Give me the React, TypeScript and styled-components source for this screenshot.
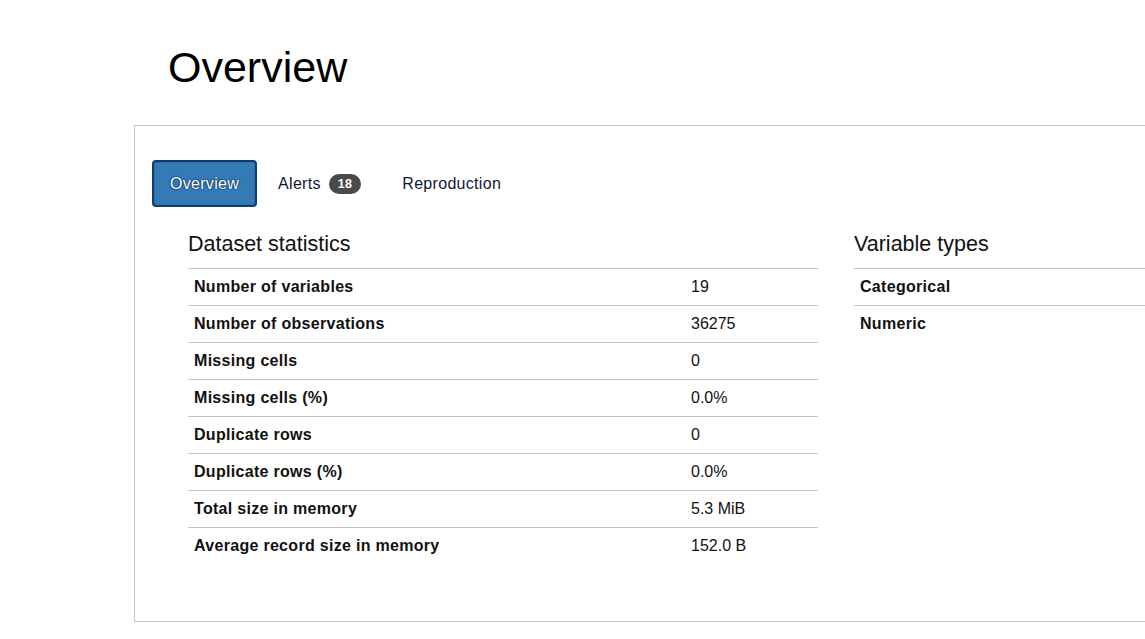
import React from "react";
import styled, { createGlobalStyle } from "styled-components";

const Global = createGlobalStyle`
  html, body {
    margin: 0;
    padding: 0;
    background: #fff;
    overflow: hidden;
    font-family: "Liberation Sans", Arial, sans-serif;
    color: #000;
  }
`;

const Page = styled.div`
  width: 1145px;
  height: 639px;
  overflow: hidden;
  padding-top: 46px;
  padding-left: 134px;
  box-sizing: border-box;
`;

const Title = styled.h1`
  margin: 0 0 36px 34px;
  font-size: 43px;
  line-height: 43px;
  font-weight: 400;
  color: #000;
`;

const Panel = styled.section`
  width: 1100px;
  height: 497px;
  box-sizing: border-box;
  border: 1px solid #c6c6c6;
  padding: 34px 0 0 17px;
`;

const Tabs = styled.nav`
  display: flex;
  align-items: center;
  height: 47px;
`;

const ActiveTab = styled.button`
  height: 47px;
  box-sizing: border-box;
  padding: 0 16px;
  background: #337ab7;
  border: 2px solid #123c6e;
  border-radius: 4px;
  color: #fff;
  font-family: "Liberation Sans", Arial, sans-serif;
  font-size: 16px;
  letter-spacing: 0.3px;
  text-shadow: 0 0 2px #0b2545, 0 0 1px #0b2545;
  box-shadow: inset 0 0 2px rgba(0, 0, 0, 0.35);
`;

const TabLink = styled.a`
  display: flex;
  align-items: center;
  gap: 8px;
  margin-left: 1px;
  padding: 0 20px;
  font-size: 16px;
  letter-spacing: 0.3px;
  color: #12163a;
  text-decoration: none;
`;

const Badge = styled.span`
  display: inline-flex;
  align-items: center;
  justify-content: center;
  height: 20px;
  padding: 0 9px;
  border-radius: 10px;
  background: #4a4a4a;
  color: #fff;
  font-size: 12.5px;
  font-weight: 700;
  letter-spacing: 0.3px;
`;

const Columns = styled.div`
  display: grid;
  grid-template-columns: 630px 1fr;
  column-gap: 36px;
  margin: 27px 0 0 36px;
`;

const Section = styled.div`
  display: flex;
  flex-direction: column;
  min-width: 0;
`;

const SectionTitle = styled.h2`
  margin: 0 0 13px 0;
  font-size: 21.5px;
  line-height: 21px;
  font-weight: 400;
  color: #111;
`;

const Table = styled.div`
  display: flex;
  flex-direction: column;
`;

const Row = styled.div<{ $labelWidth: string }>`
  display: grid;
  grid-template-columns: ${(p) => p.$labelWidth} 1fr;
  height: 37px;
  box-sizing: border-box;
  border-top: 1px solid #c4c4c4;
  align-items: center;
  justify-items: start;
`;

const Label = styled.span`
  padding-left: 6px;
  font-size: 16px;
  font-weight: 700;
  letter-spacing: 0.3px;
  color: #111;
`;

const Value = styled.span`
  padding-left: 6px;
  font-size: 16px;
  color: #111;
`;

const stats: [string, string][] = [
  ["Number of variables", "19"],
  ["Number of observations", "36275"],
  ["Missing cells", "0"],
  ["Missing cells (%)", "0.0%"],
  ["Duplicate rows", "0"],
  ["Duplicate rows (%)", "0.0%"],
  ["Total size in memory", "5.3 MiB"],
  ["Average record size in memory", "152.0 B"],
];

const types: string[] = ["Categorical", "Numeric"];

export default function App() {
  return (
    <>
      <Global />
      <Page>
        <Title>Overview</Title>
        <Panel>
          <Tabs>
            <ActiveTab>Overview</ActiveTab>
            <TabLink>
              Alerts <Badge>18</Badge>
            </TabLink>
            <TabLink>Reproduction</TabLink>
          </Tabs>
          <Columns>
            <Section>
              <SectionTitle>Dataset statistics</SectionTitle>
              <Table>
                {stats.map(([k, v]) => (
                  <Row key={k} $labelWidth="497px">
                    <Label>{k}</Label>
                    <Value>{v}</Value>
                  </Row>
                ))}
              </Table>
            </Section>
            <Section>
              <SectionTitle>Variable types</SectionTitle>
              <Table>
                {types.map((k) => (
                  <Row key={k} $labelWidth="auto">
                    <Label>{k}</Label>
                  </Row>
                ))}
              </Table>
            </Section>
          </Columns>
        </Panel>
      </Page>
    </>
  );
}
